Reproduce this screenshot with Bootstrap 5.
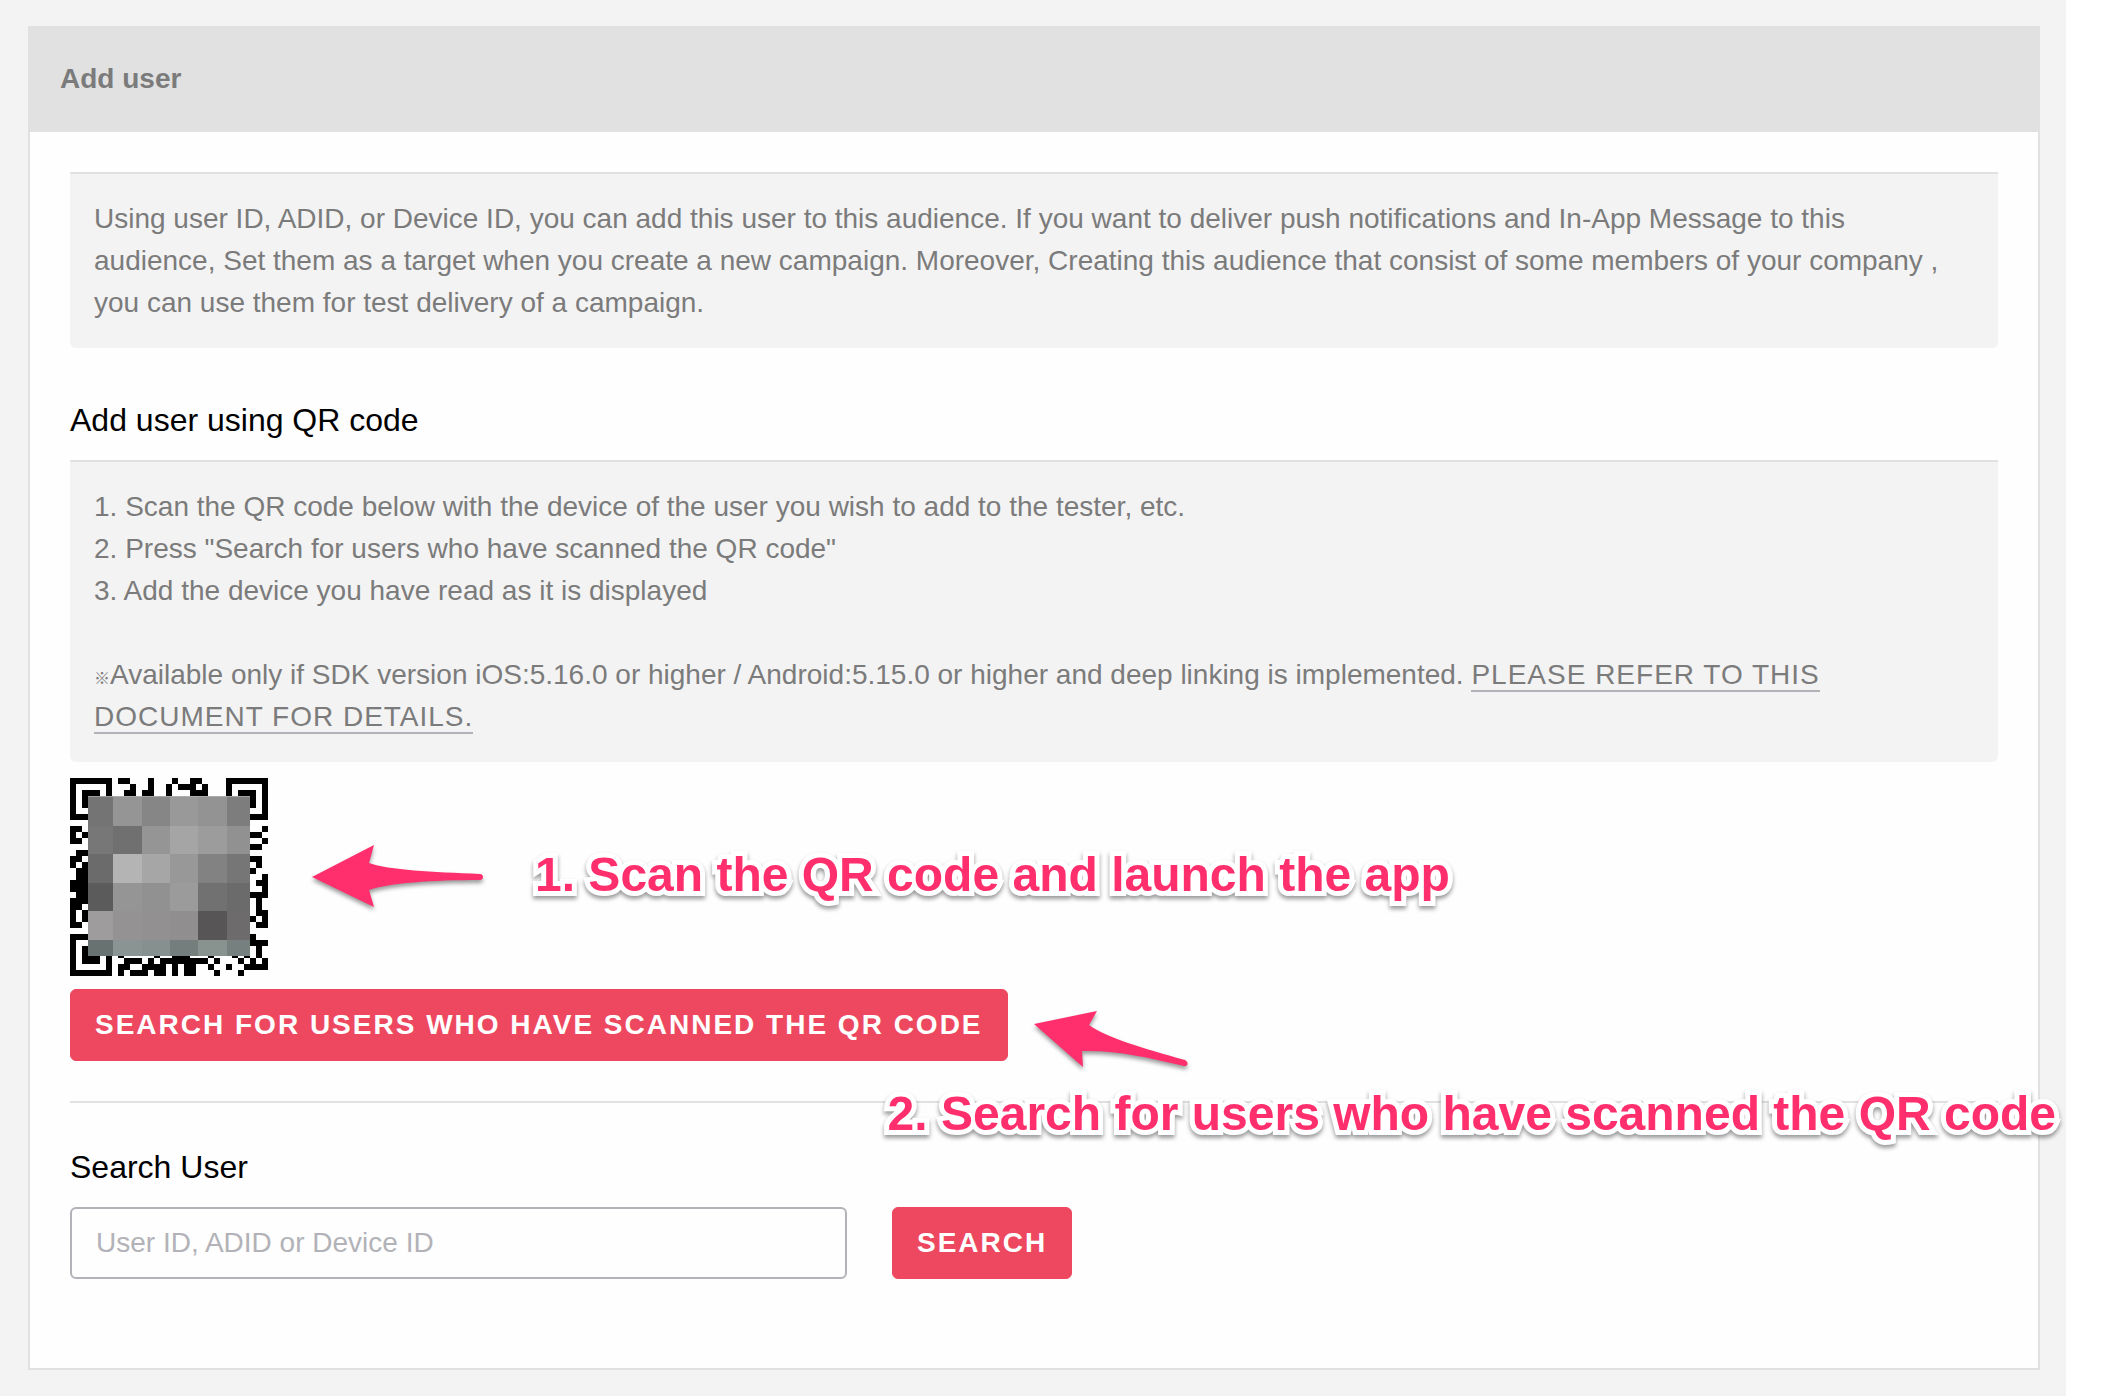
<!DOCTYPE html>
<html lang="en">
<head>
<meta charset="utf-8">
<meta name="viewport" content="width=device-width, initial-scale=1">
<title>Add user</title>
<link href="https://cdn.jsdelivr.net/npm/bootstrap@5.3.0/dist/css/bootstrap.min.css" rel="stylesheet">
<style>
  body { font-family: "Liberation Sans", "Noto Sans CJK JP", sans-serif; font-size: 28px; line-height: 42px; color: #7b7b7b; background: #fff; }
  .page-shell { margin-right: 52px; padding: 26px 26px 26px 28px; background: #f3f3f3; }
  .panel { border: 2px solid #e1e1e1; border-top: 0; background: #fefefe; border-radius: 0; }
  .panel-head { margin: 0 -2px; padding: 32px; background: #e1e1e1; font-size: 28px; line-height: 42px; color: #7b7b7b; border: 0; }
  .panel-main { padding: 40px; }
  .info-box { padding: 24px; border-top: 2px solid #e1e1e1; border-radius: 0 0 6px 6px; background: #f3f3f3; }
  .section-title { margin: 0 0 20px; font-size: 32px; line-height: 40px; font-weight: 400; color: #000; }
  .box-gap { margin-bottom: 52px; }
  .note-sign { font-size: 16px; line-height: 16px; }
  .doc-link { color: #7b7b7b; letter-spacing: 1px; text-transform: uppercase; text-decoration: none; border-bottom: 2px solid #b2b2b8; }
  .qr-row { margin: 16px 0 13px; }
  .qr-img { width: 198px; height: 198px; flex: none; }
  .btn-brand { --bs-btn-bg: #ed4860; --bs-btn-color: #fff; --bs-btn-border-color: #ed4860; --bs-btn-hover-bg: #d93a52; --bs-btn-hover-color: #fff; --bs-btn-active-bg: #d93a52; --bs-btn-active-color: #fff;
    padding: 0 24px; height: 72px; border-radius: 6px; font-size: 28px; font-weight: 700; line-height: 42px; letter-spacing: 2px; text-transform: uppercase; }
  .rule { margin: 40px 0 44px; border-top: 2px solid #e1e1e1; opacity: 1; }
  .search-row { gap: 45px; }
  .field-wrap { width: 777px; max-width: 100%; }
  .search-field { height: 72px; padding: 0 24px; font-size: 28px; border: 2px solid #b2b2b8; border-radius: 6px; background: #fefefe; }
  .search-field::placeholder { color: #b2b2b8; }
  .arrow { flex: none; overflow: visible; filter: drop-shadow(0 3px 2px rgba(0,0,0,.4)); }
  .arrow-scan { margin: 0 48px; }
  .arrow-search { margin-left: 26px; }
  .callout-note { padding-bottom: 4px; font-size: 48px; line-height: 56px; font-weight: 700; color: #ff2e6c; white-space: nowrap; -webkit-text-stroke: 10px #fff; paint-order: stroke fill; stroke-linejoin: round; filter: drop-shadow(0 3px 2px rgba(0,0,0,.4)); }
  .callout-over { position: absolute; right: -58px; bottom: -43px; }
</style>
<script src="https://cdn.jsdelivr.net/npm/bootstrap@5.3.0/dist/js/bootstrap.bundle.min.js"></script>
</head>
<body>
<main class="page-shell min-vh-100 d-flex flex-column">
  <section class="panel card flex-fill">
    <h1 class="panel-head card-header fw-bold rounded-0">Add user</h1>
    <div class="panel-main card-body">
      <p class="info-box box-gap">Using user ID, ADID, or Device ID, you can add this user to this audience. If you want to deliver push notifications and In-App Message to this audience, Set them as a target when you create a new campaign. Moreover, Creating this audience that consist of some members of your company , you can use them for test delivery of a campaign.</p>

      <h2 class="section-title">Add user using QR code</h2>
      <div class="info-box">
        1. Scan the QR code below with the device of the user you wish to add to the tester, etc.<br>
        2. Press "Search for users who have scanned the QR code"<br>
        3. Add the device you have read as it is displayed<br><br>
        <span class="note-sign">※</span>Available only if SDK version iOS:5.16.0 or higher / Android:5.15.0 or higher and deep linking is implemented. <a class="doc-link" href="#">Please refer to this document for details.</a>
      </div>

      <div class="qr-row d-flex align-items-center">
        <svg class="qr-img" viewBox="0 0 198 198" role="img" aria-label="QR code" shape-rendering="crispEdges">
          <g transform="scale(6)" stroke="#000" stroke-width="1" fill="none">
            <path d="M0 .5h7m1 0h2m3 0h1m3 0h1m2 0h2m4 0h7
              M0 1.5h1m5 0h1m3 0h1m2 0h1m2 0h1m1 0h3m1 0h1m3 0h1m5 0h1
              M0 2.5h1m1 0h3m1 0h1m2 0h2m1 0h2m2 0h1m3 0h3m3 0h1m1 0h3m1 0h1
              M0 3.5h1m1 0h1m27 0h1m1 0h1 M0 4.5h1m1 0h1m27 0h1m1 0h1
              M0 5.5h1m31 0h1 M0 6.5h3m27 0h3
              M0 8.5h2m30 0h1 M0 9.5h1m1 0h1m27 0h2 M0 10.5h2m30 0h1
              M30 11.5h2 M1 12.5h2 M0 13.5h2m28 0h2 M0 14.5h1m1 0h1m28 0h1
              M1 15.5h2m27 0h1 M1 16.5h2m29 0h1 M0 17.5h3m28 0h2
              M0 18.5h3m29 0h1 M1 19.5h2m27 0h3 M0 20.5h3m28 0h1
              M0 21.5h2m29 0h1 M0 22.5h1m1 0h1m28 0h2 M0 23.5h1m1 0h1m27 0h1m1 0h1
              M0 24.5h2m29 0h2 M0 26.5h7m23 0h1 M0 27.5h1m29 0h3
              M0 28.5h1m1 0h1m28 0h1 M0 29.5h1m1 0h3m1 0h1m1 0h1m5 0h1m2 0h3m3 0h1m3 0h1m1 0h1m1 0h1
              M0 30.5h1m1 0h3m1 0h1m2 0h3m1 0h1m1 0h8m1 0h1m3 0h1m1 0h1m1 0h1
              M0 31.5h1m5 0h1m1 0h2m2 0h4m1 0h1m1 0h2m2 0h1m2 0h1m2 0h4
              M0 32.5h7m1 0h1m1 0h3m1 0h2m1 0h1m1 0h2m3 0h1m3 0h1"/>
          </g>
          <g>
            <path fill="#747474" d="M18 18h25v30H18z"/><path fill="#959595" d="M43 18h29v30H43z"/><path fill="#868686" d="M72 18h28v30H72z"/><path fill="#999" d="M100 18h28v30h-28z"/><path fill="#939393" d="M128 18h29v30h-29z"/><path fill="#7d7d7d" d="M157 18h23v30h-23z"/>
            <path fill="#777" d="M18 48h25v28H18z"/><path fill="#707070" d="M43 48h29v28H43z"/><path fill="#959595" d="M72 48h28v28H72z"/><path fill="#a5a5a5" d="M100 48h28v28h-28z"/><path fill="#9c9c9c" d="M128 48h29v28h-29z"/><path fill="#919191" d="M157 48h23v28h-23z"/>
            <path fill="#6b6b6b" d="M18 76h25v29H18z"/><path fill="#b4b4b4" d="M43 76h29v29H43z"/><path fill="#a6a6a6" d="M72 76h28v29H72z"/><path fill="#989898" d="M100 76h28v29h-28z"/><path fill="#828282" d="M128 76h29v29h-29z"/><path fill="#767676" d="M157 76h23v29h-23z"/>
            <path fill="#5b5b5b" d="M18 105h25v28H18z"/><path fill="#959595" d="M43 105h29v28H43z"/><path fill="#919191" d="M72 105h28v28H72z"/><path fill="#9b9b9b" d="M100 105h28v28h-28z"/><path fill="#717171" d="M128 105h29v28h-29z"/><path fill="#6b6b6b" d="M157 105h23v28h-23z"/>
            <path fill="#9e9c9d" d="M18 133h25v29H18z"/><path fill="#949293" d="M43 133h29v29H43z"/><path fill="#929091" d="M72 133h28v29H72z"/><path fill="#908e8f" d="M100 133h28v29h-28z"/><path fill="#575556" d="M128 133h29v29h-29z"/><path fill="#6e6b6c" d="M157 133h23v29h-23z"/>
            <path fill="#687371" d="M18 162h25v16H18z"/><path fill="#8a9492" d="M43 162h29v16H43z"/><path fill="#86908e" d="M72 162h28v16H72z"/><path fill="#747e7c" d="M100 162h28v16h-28z"/><path fill="#88928f" d="M128 162h29v16h-29z"/><path fill="#76807e" d="M157 162h23v16h-23z"/>
            <path fill="#bbb" fill-opacity=".6" d="M18 18h162v1H18z"/>
          </g>
        </svg>
        <svg class="arrow arrow-scan" width="171" height="68" viewBox="0 0 171 68" aria-hidden="true">
          <path fill="#ff2e6c" d="M-4 34L58 2l-5 18c20 7 63 9 111 11 4 0 4 6 0 6-48 0-91 3-111 10l5 17z"/>
        </svg>
        <span class="callout-note">1. Scan the QR code and launch the app</span>
      </div>

      <div class="d-flex">
        <button type="button" class="btn btn-brand">Search for users who have scanned the QR code</button>
        <svg class="arrow arrow-search" width="156" height="72" viewBox="0 0 156 72" aria-hidden="true">
          <path fill="#ff2e6c" d="M0 35l63-13-8 14c16 12 56 24 96 35 4 2 3 7-1 6-38-9-68-16-102-15l1 16z"/>
        </svg>
      </div>

      <div class="position-relative">
        <hr class="rule">
        <div class="callout-note callout-over">2. Search for users who have scanned the QR code</div>
      </div>

      <form onsubmit="return false">
        <h2 class="section-title"><label for="user-query">Search User</label></h2>
        <div class="search-row d-flex flex-wrap">
          <div class="field-wrap"><input id="user-query" type="text" class="form-control search-field" placeholder="User ID, ADID or Device ID"></div>
          <button type="submit" class="btn btn-brand">Search</button>
        </div>
      </form>
    </div>
  </section>
</main>
</body>
</html>
